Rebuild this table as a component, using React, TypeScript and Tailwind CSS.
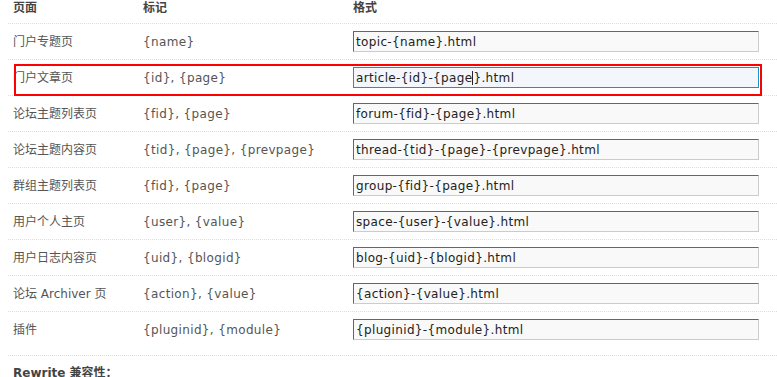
import React from "react";

const rows: { page: string; marks: string; format: string; focused?: boolean }[] = [
  { page: "门户专题页", marks: "{name}", format: "topic-{name}.html" },
  { page: "门户文章页", marks: "{id}, {page}", format: "article-{id}-{page}.html", focused: true },
  { page: "论坛主题列表页", marks: "{fid}, {page}", format: "forum-{fid}-{page}.html" },
  { page: "论坛主题内容页", marks: "{tid}, {page}, {prevpage}", format: "thread-{tid}-{page}-{prevpage}.html" },
  { page: "群组主题列表页", marks: "{fid}, {page}", format: "group-{fid}-{page}.html" },
  { page: "用户个人主页", marks: "{user}, {value}", format: "space-{user}-{value}.html" },
  { page: "用户日志内容页", marks: "{uid}, {blogid}", format: "blog-{uid}-{blogid}.html" },
  { page: "论坛 Archiver 页", marks: "{action}, {value}", format: "{action}-{value}.html" },
  { page: "插件", marks: "{pluginid}, {module}", format: "{pluginid}-{module}.html" },
];

const font = {
  fontFamily: '"DejaVu Sans", Verdana, "Noto Sans CJK SC", sans-serif',
};

function FormatBox({ value, focused }: { value: string; focused?: boolean }) {
  if (focused) {
    const cut = value.indexOf("page") + 4;
    return (
      <div className="flex h-[21px] w-[406px] items-center border border-[#1596c8] bg-[#f3f7fc] pl-[2px] text-[12px] tracking-[0.35px] text-[#222]">
        <span>{value.slice(0, cut)}</span>
        <span className="h-[14px] w-px bg-[#222]" />
        <span>{value.slice(cut)}</span>
      </div>
    );
  }
  return (
    <div className="flex h-[21px] w-[406px] items-center border border-t-[#666] border-l-[#666] border-r-[#ccc] border-b-[#ccc] bg-[#f9f9f9] pl-[2px] text-[12px] tracking-[0.35px] text-[#222]">
      {value}
    </div>
  );
}

export default function App() {
  return (
    <div className="relative h-[377px] w-[777px] overflow-hidden bg-white text-[12px] text-[#555]" style={font}>
      <div className="ml-[8px]">
        {/* header */}
        <div className="grid h-[24px] grid-cols-[130px_210px_1fr] border-b border-dotted border-[#ddd] font-bold text-[#444]">
          <div className="pl-[5px] leading-[16px]">页面</div>
          <div className="pl-[5px] leading-[16px]">标记</div>
          <div className="pl-[5px] leading-[16px]">格式</div>
        </div>
        {rows.map((r, i) => (
          <div
            key={r.page}
            className={
              i === rows.length - 1
                ? "grid h-[44px] grid-cols-[130px_210px_1fr] items-start border-b border-dotted border-[#ddd] pt-[7px]"
                : "grid h-[36px] grid-cols-[130px_210px_1fr] items-start border-b border-dotted border-[#ddd] pt-[7px]"
            }
          >
            <div className="flex h-[21px] items-center pl-[5px]">{r.page}</div>
            <div className="flex h-[21px] items-center pl-[5px] tracking-[0.35px]">{r.marks}</div>
            <div className="pl-[5px]">
              <FormatBox value={r.format} focused={r.focused} />
            </div>
          </div>
        ))}
        <div className="pl-[5px] pt-[9px] font-bold leading-[16px] text-[#444]">Rewrite 兼容性：</div>
      </div>
      {/* highlight frame around the edited row */}
      <div className="pointer-events-none absolute left-[14px] top-[64px] h-[32px] w-[748px] border-2 border-[#f00]" />
    </div>
  );
}
